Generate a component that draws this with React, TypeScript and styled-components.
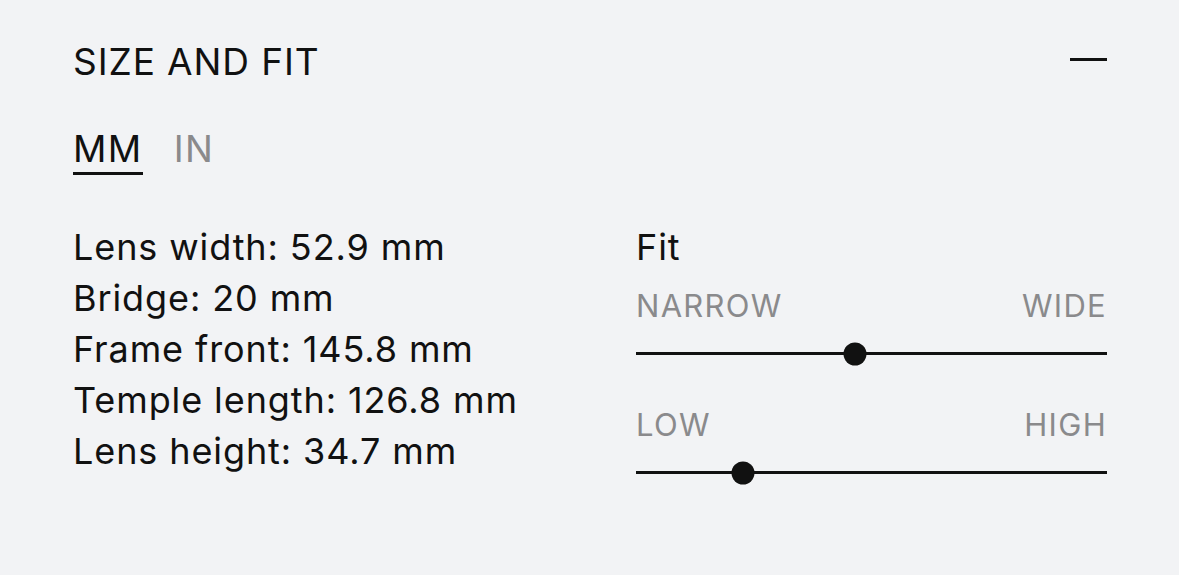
import React from "react";
import styled, { createGlobalStyle } from "styled-components";

const GlobalStyle = createGlobalStyle`
	html, body {
		margin: 0;
		padding: 0;
		background: #f2f3f5;
	}
	body {
		font-family: Inter, "Noto Sans", sans-serif;
		font-weight: 400;
		color: #111;
	}
`;

const Panel = styled.section`
	width: 1179px;
	height: 575px;
	box-sizing: border-box;
	padding: 40px 72px 0 73px;
	background: #f2f3f5;
`;

const Header = styled.div`
	display: flex;
	align-items: center;
	justify-content: space-between;
	height: 44px;
`;

const Title = styled.h2`
	margin: 0;
	font-size: 37px;
	font-weight: 400;
	letter-spacing: 0.9px;
	line-height: 44px;
`;

const CollapseButton = styled.button`
	width: 37px;
	height: 24px;
	padding: 0;
	margin-top: -6px;
	border: 0;
	background: transparent;
	display: flex;
	align-items: center;
	cursor: pointer;

	&::before {
		content: "";
		display: block;
		width: 100%;
		height: 3px;
		background: #111;
	}
`;

const Tabs = styled.div`
	display: flex;
	gap: 31px;
	margin-top: 45px;
`;

const Tab = styled.button<{ $active?: boolean }>`
	padding: 0 0 3px;
	border: 0;
	border-bottom: 3px solid ${(p) => (p.$active ? "#111" : "transparent")};
	background: transparent;
	font-family: inherit;
	font-weight: 400;
	font-size: 37px;
	letter-spacing: 1.4px;
	line-height: 40px;
	color: ${(p) => (p.$active ? "#111" : "#8a8a8c")};
	cursor: pointer;
`;

const Body = styled.div`
	display: grid;
	grid-template-columns: 1fr 471px;
	margin-top: 47px;
`;

const Specs = styled.ul`
	list-style: none;
	margin: 0;
	padding: 0;
	font-size: 36px;
	letter-spacing: 0.9px;
	line-height: 51px;
`;

const Fit = styled.div`
	display: flex;
	flex-direction: column;
`;

const FitLabel = styled.div`
	font-size: 36px;
	letter-spacing: 0.9px;
	line-height: 51px;
`;

const Scale = styled.div`
	display: flex;
	justify-content: space-between;
	font-size: 31px;
	letter-spacing: 1.3px;
	line-height: 40px;
	color: #8a8a8c;
	margin-top: 13px;
`;

const Track = styled.div`
	position: relative;
	height: 3px;
	background: #111;
	margin: 26px 0 37px;
`;

const Thumb = styled.span`
	position: absolute;
	top: 50%;
	width: 23px;
	height: 23px;
	border-radius: 50%;
	background: #111;
	transform: translate(-50%, -50%);
`;

const specs = [
	"Lens width: 52.9 mm",
	"Bridge: 20 mm",
	"Frame front: 145.8 mm",
	"Temple length: 126.8 mm",
	"Lens height: 34.7 mm",
];

const scales = [
	{ low: "NARROW", high: "WIDE", value: 46.5 },
	{ low: "LOW", high: "HIGH", value: 22.7 },
];

export default function App() {
	return (
		<>
			<GlobalStyle />
			<Panel>
				<Header>
					<Title>SIZE AND FIT</Title>
					<CollapseButton aria-label="Collapse" />
				</Header>
				<Tabs>
					<Tab $active>MM</Tab>
					<Tab>IN</Tab>
				</Tabs>
				<Body>
					<Specs>
						{specs.map((s) => (
							<li key={s}>{s}</li>
						))}
					</Specs>
					<Fit>
						<FitLabel>Fit</FitLabel>
						{scales.map((s) => (
							<div key={s.low}>
								<Scale>
									<span>{s.low}</span>
									<span>{s.high}</span>
								</Scale>
								<Track>
									<Thumb style={{ left: `${s.value}%` }} />
								</Track>
							</div>
						))}
					</Fit>
				</Body>
			</Panel>
		</>
	);
}
